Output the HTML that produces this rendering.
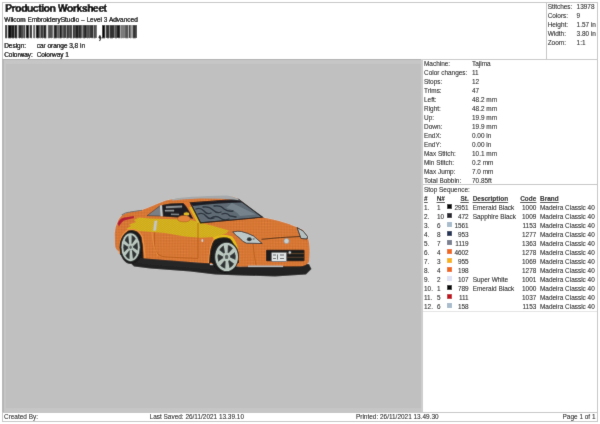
<!DOCTYPE html>
<html><head><meta charset="utf-8"><style>
html,body{margin:0;padding:0;width:600px;height:424px;overflow:hidden;background:#fff;}
body{position:relative;font-family:"Liberation Sans",sans-serif;color:#000;}
.t{position:absolute;white-space:nowrap;line-height:1;filter:grayscale(1);-webkit-text-stroke:0.06px #000;}
.r{position:absolute;}
</style></head><body>
<svg width="0" height="0" style="position:absolute"><filter id="bl" x="0" y="0" width="100%" height="100%"><feConvolveMatrix order="3" kernelMatrix="0.01 0.07 0.01 0.07 0.68 0.07 0.01 0.07 0.01" edgeMode="duplicate"/></filter></svg>
<div id="w" style="position:absolute;left:0;top:0;width:600px;height:424px;background:#fff;filter:url(#bl)">
<div class="r" style="left:2px;top:2px;width:596px;height:1px;background:#c4c4c4;"></div>
<div class="r" style="left:2px;top:2px;width:1px;height:420px;background:#c4c4c4;"></div>
<div class="r" style="left:597px;top:2px;width:1px;height:420px;background:#c4c4c4;"></div>
<div class="r" style="left:545.5px;top:2px;width:1px;height:57px;background:#c4c4c4;"></div>
<div class="r" style="left:423px;top:59px;width:175px;height:1px;background:#c8c8c8;"></div>
<div class="r" style="left:2px;top:59px;width:419px;height:353px;background:#c0c0c0;"></div>
<div class="r" style="left:2px;top:59px;width:421px;height:1px;background:#b0b0b0;"></div>
<div class="r" style="left:2px;top:60px;width:2px;height:352px;background:#b6b6b6;"></div>
<div class="r" style="left:4px;top:60px;width:417px;height:4px;background:#c6c6c6;"></div>
<div class="r" style="left:4px;top:64px;width:2px;height:348px;background:#c6c6c6;"></div>
<div class="r" style="left:6px;top:408px;width:415px;height:4px;background:#c6c6c6;"></div>
<div class="r" style="left:421px;top:59px;width:2px;height:353px;background:#cdcdcd;"></div>
<div class="r" style="left:423px;top:184px;width:174px;height:1px;background:#c4c4c4;"></div>
<div class="r" style="left:423px;top:311px;width:174px;height:1px;background:#e4e4e4;"></div>
<div class="r" style="left:2px;top:412px;width:596px;height:1px;background:#c4c4c4;"></div>
<div class="r" style="left:2px;top:421px;width:596px;height:1px;background:#c4c4c4;"></div>
<div class="t" style="left:5.3px;top:4.00px;font-size:10px;font-weight:bold;letter-spacing:-0.25px;-webkit-text-stroke:0.18px #000;">Production Worksheet</div>
<div class="t" style="left:4.3px;top:17.00px;font-size:6.45px;letter-spacing:0.035px;">Wilcom EmbroideryStudio – Level 3 Advanced</div>
<div class="t" style="left:4.2px;top:43.00px;font-size:6.45px;">Design:</div>
<div class="t" style="left:36.7px;top:43.00px;font-size:6.45px;">car orange 3,8 in</div>
<div class="t" style="left:4.2px;top:52.00px;font-size:6.45px;">Colorway:</div>
<div class="t" style="left:36.7px;top:52.00px;font-size:6.45px;">Colorway 1</div>
<svg class="r" style="left:0;top:25px" width="140" height="13" shape-rendering="crispEdges"><rect x="5.1" y="0" width="1.50" height="13" fill="rgb(110,110,110)"/><rect x="6.6" y="0" width="1.30" height="13" fill="rgb(200,200,200)"/><rect x="7.9" y="0" width="4.10" height="13" fill="rgb(70,70,70)"/><rect x="12.0" y="0" width="1.10" height="13" fill="rgb(200,200,200)"/><rect x="13.1" y="0" width="1.30" height="13" fill="rgb(60,60,60)"/><rect x="14.4" y="0" width="0.90" height="13" fill="rgb(120,120,120)"/><rect x="15.3" y="0" width="1.70" height="13" fill="rgb(50,50,50)"/><rect x="17.0" y="0" width="1.30" height="13" fill="rgb(210,210,210)"/><rect x="18.3" y="0" width="1.70" height="13" fill="rgb(130,130,130)"/><rect x="20.0" y="0" width="1.30" height="13" fill="rgb(50,50,50)"/><rect x="21.3" y="0" width="3.10" height="13" fill="rgb(150,150,150)"/><rect x="24.4" y="0" width="1.30" height="13" fill="rgb(190,190,190)"/><rect x="25.7" y="0" width="1.30" height="13" fill="rgb(40,40,40)"/><rect x="27.0" y="0" width="1.30" height="13" fill="rgb(120,120,120)"/><rect x="28.3" y="0" width="1.70" height="13" fill="rgb(170,170,170)"/><rect x="30.0" y="0" width="1.70" height="13" fill="rgb(60,60,60)"/><rect x="31.7" y="0" width="1.50" height="13" fill="rgb(240,240,240)"/><rect x="33.2" y="0" width="2.00" height="13" fill="rgb(150,150,150)"/><rect x="35.2" y="0" width="0.90" height="13" fill="rgb(210,210,210)"/><rect x="36.1" y="0" width="1.00" height="13" fill="rgb(20,20,20)"/><rect x="37.1" y="0" width="2.40" height="13" fill="rgb(110,110,110)"/><rect x="39.5" y="0" width="1.50" height="13" fill="rgb(220,220,220)"/><rect x="41.0" y="0" width="1.10" height="13" fill="rgb(50,50,50)"/><rect x="42.1" y="0" width="2.60" height="13" fill="rgb(110,110,110)"/><rect x="44.7" y="0" width="0.90" height="13" fill="rgb(60,60,60)"/><rect x="45.6" y="0" width="2.20" height="13" fill="rgb(220,220,220)"/><rect x="47.8" y="0" width="1.30" height="13" fill="rgb(140,140,140)"/><rect x="49.1" y="0" width="2.60" height="13" fill="rgb(80,80,80)"/><rect x="51.7" y="0" width="1.30" height="13" fill="rgb(120,120,120)"/><rect x="53.0" y="0" width="1.70" height="13" fill="rgb(245,245,245)"/><rect x="54.7" y="0" width="1.30" height="13" fill="rgb(60,60,60)"/><rect x="56.0" y="0" width="2.60" height="13" fill="rgb(130,130,130)"/><rect x="58.6" y="0" width="1.30" height="13" fill="rgb(200,200,200)"/><rect x="59.9" y="0" width="1.10" height="13" fill="rgb(40,40,40)"/><rect x="61.0" y="0" width="3.20" height="13" fill="rgb(110,110,110)"/><rect x="64.2" y="0" width="1.30" height="13" fill="rgb(60,60,60)"/><rect x="65.5" y="0" width="1.50" height="13" fill="rgb(230,230,230)"/><rect x="67.0" y="0" width="3.70" height="13" fill="rgb(90,90,90)"/><rect x="70.7" y="0" width="2.20" height="13" fill="rgb(200,200,200)"/><rect x="72.9" y="0" width="1.30" height="13" fill="rgb(40,40,40)"/><rect x="74.2" y="0" width="4.30" height="13" fill="rgb(110,110,110)"/><rect x="78.5" y="0" width="1.10" height="13" fill="rgb(30,30,30)"/><rect x="79.6" y="0" width="1.50" height="13" fill="rgb(230,230,230)"/><rect x="81.1" y="0" width="0.90" height="13" fill="rgb(120,120,120)"/><rect x="82.0" y="0" width="2.00" height="13" fill="rgb(140,140,140)"/><rect x="84.0" y="0" width="1.00" height="13" fill="rgb(235,235,235)"/><rect x="85.0" y="0" width="1.30" height="13" fill="rgb(30,30,30)"/><rect x="86.3" y="0" width="2.60" height="13" fill="rgb(80,80,80)"/><rect x="88.9" y="0" width="1.10" height="13" fill="rgb(210,210,210)"/><rect x="90.0" y="0" width="1.50" height="13" fill="rgb(60,60,60)"/><rect x="91.5" y="0" width="1.80" height="13" fill="rgb(35,35,35)"/><rect x="93.3" y="0" width="1.30" height="13" fill="rgb(200,200,200)"/><rect x="94.6" y="0" width="2.10" height="13" fill="rgb(110,110,110)"/><rect x="102.1" y="0" width="2.00" height="13" fill="rgb(50,50,50)"/><rect x="104.1" y="0" width="1.70" height="13" fill="rgb(190,190,190)"/><rect x="105.8" y="0" width="2.20" height="13" fill="rgb(60,60,60)"/><rect x="108.0" y="0" width="1.60" height="13" fill="rgb(140,140,140)"/><rect x="109.6" y="0" width="1.10" height="13" fill="rgb(220,220,220)"/><rect x="110.7" y="0" width="3.20" height="13" fill="rgb(50,50,50)"/><rect x="113.9" y="0" width="0.80" height="13" fill="rgb(120,120,120)"/><rect x="114.7" y="0" width="2.10" height="13" fill="rgb(200,200,200)"/><rect x="116.8" y="0" width="2.70" height="13" fill="rgb(40,40,40)"/><rect x="119.5" y="0" width="1.60" height="13" fill="rgb(210,210,210)"/><rect x="121.1" y="0" width="1.30" height="13" fill="rgb(30,30,30)"/><rect x="122.4" y="0" width="3.50" height="13" fill="rgb(130,130,130)"/><rect x="125.9" y="0" width="1.00" height="13" fill="rgb(40,40,40)"/><rect x="126.9" y="0" width="2.20" height="13" fill="rgb(210,210,210)"/><rect x="129.1" y="0" width="1.30" height="13" fill="rgb(40,40,40)"/><rect x="130.4" y="0" width="2.70" height="13" fill="rgb(180,180,180)"/><rect x="133.1" y="0" width="1.30" height="13" fill="rgb(40,40,40)"/><rect x="134.4" y="0" width="1.30" height="13" fill="rgb(140,140,140)"/><rect x="135.7" y="0" width="1.40" height="13" fill="rgb(70,70,70)"/></svg>
<svg class="r" style="left:96px;top:34px" width="8" height="8"><ellipse cx="3.9" cy="3.2" rx="1.25" ry="1.35" fill="#000"/><path d="M4.9,3.4 Q4.8,5.6 3.2,6.9" stroke="#111" stroke-width="1.1" fill="none"/></svg>
<div class="r" style="left:423px;top:59px;width:175px;height:1px;background:#c8c8c8;"></div>
<div class="r" style="left:2px;top:59px;width:419px;height:353px;background:#c0c0c0;"></div>
<div class="r" style="left:2px;top:59px;width:421px;height:1px;background:#b0b0b0;"></div>
<div class="r" style="left:2px;top:60px;width:2px;height:352px;background:#b6b6b6;"></div>
<div class="r" style="left:4px;top:60px;width:417px;height:4px;background:#c6c6c6;"></div>
<div class="r" style="left:4px;top:64px;width:2px;height:348px;background:#c6c6c6;"></div>
<div class="r" style="left:6px;top:408px;width:415px;height:4px;background:#c6c6c6;"></div>
<div class="r" style="left:421px;top:59px;width:2px;height:353px;background:#cdcdcd;"></div>
<div class="r" style="left:423px;top:184px;width:174px;height:1px;background:#c4c4c4;"></div>
<div class="r" style="left:423px;top:311px;width:174px;height:1px;background:#e4e4e4;"></div>
<div class="r" style="left:2px;top:412px;width:596px;height:1px;background:#c4c4c4;"></div>
<div class="r" style="left:2px;top:421px;width:596px;height:1px;background:#c4c4c4;"></div>
<div class="t" style="left:5.3px;top:4.00px;font-size:10px;font-weight:bold;letter-spacing:-0.25px;-webkit-text-stroke:0.18px #000;">Production Worksheet</div>
<div class="t" style="left:4.3px;top:17.00px;font-size:6.45px;letter-spacing:0.035px;">Wilcom EmbroideryStudio – Level 3 Advanced</div>
<div class="t" style="left:4.2px;top:43.00px;font-size:6.45px;">Design:</div>
<div class="t" style="left:36.7px;top:43.00px;font-size:6.45px;">car orange 3,8 in</div>
<div class="t" style="left:4.2px;top:52.00px;font-size:6.45px;">Colorway:</div>
<div class="t" style="left:36.7px;top:52.00px;font-size:6.45px;">Colorway 1</div>
<svg class="r" style="left:0;top:24.7px" width="140" height="14"><rect x="5.3" y="0" width="1.5" height="13.3" fill="#222"/><rect x="8.3" y="0" width="3.0" height="13.3" fill="#111"/><rect x="12.1" y="0" width="2.0" height="13.3" fill="#111"/><rect x="15.1" y="0" width="2.0" height="13.3" fill="#111"/><rect x="19.1" y="0" width="1.0" height="13.3" fill="#111"/><rect x="20.9" y="0" width="2.0" height="13.3" fill="#444"/><rect x="23.7" y="0" width="1.0" height="13.3" fill="#111"/><rect x="26.7" y="0" width="2.0" height="13.3" fill="#111"/><rect x="30.7" y="0" width="1.0" height="13.3" fill="#222"/><rect x="33.7" y="0" width="1.0" height="13.3" fill="#555"/><rect x="36.7" y="0" width="2.0" height="13.3" fill="#111"/><rect x="39.7" y="0" width="1.0" height="13.3" fill="#555"/><rect x="41.7" y="0" width="1.5" height="13.3" fill="#444"/><rect x="44.2" y="0" width="2.0" height="13.3" fill="#111"/><rect x="48.2" y="0" width="1.5" height="13.3" fill="#555"/><rect x="50.7" y="0" width="1.0" height="13.3" fill="#555"/><rect x="53.7" y="0" width="3.0" height="13.3" fill="#222"/><rect x="57.7" y="0" width="1.0" height="13.3" fill="#555"/><rect x="59.5" y="0" width="2.0" height="13.3" fill="#111"/><rect x="63.5" y="0" width="1.0" height="13.3" fill="#444"/><rect x="66.5" y="0" width="2.0" height="13.3" fill="#333"/><rect x="70.0" y="0" width="2.0" height="13.3" fill="#444"/><rect x="73.0" y="0" width="1.5" height="13.3" fill="#222"/><rect x="75.5" y="0" width="3.0" height="13.3" fill="#222"/><rect x="79.3" y="0" width="2.0" height="13.3" fill="#333"/><rect x="83.3" y="0" width="2.0" height="13.3" fill="#333"/><rect x="86.8" y="0" width="1.5" height="13.3" fill="#555"/><rect x="89.1" y="0" width="1.0" height="13.3" fill="#555"/><rect x="91.6" y="0" width="1.0" height="13.3" fill="#333"/><rect x="93.6" y="0" width="2.0" height="13.3" fill="#444"/><rect x="102.0" y="0" width="3.0" height="13.3" fill="#111"/><rect x="107.0" y="0" width="2.0" height="13.3" fill="#333"/><rect x="110.0" y="0" width="3.0" height="13.3" fill="#333"/><rect x="115.0" y="0" width="2.0" height="13.3" fill="#555"/><rect x="118.5" y="0" width="1.0" height="13.3" fill="#111"/><rect x="120.5" y="0" width="2.0" height="13.3" fill="#777"/><rect x="123.3" y="0" width="1.0" height="13.3" fill="#777"/><rect x="125.3" y="0" width="3.0" height="13.3" fill="#555"/><rect x="129.8" y="0" width="1.5" height="13.3" fill="#777"/><rect x="132.8" y="0" width="3.0" height="13.3" fill="#333"/><rect x="136.6" y="0" width="0.1" height="13.3" fill="#333"/></svg>
<div class="t" style="left:98.5px;top:30.00px;font-size:9px;font-weight:bold;">,</div>
<div class="t" style="left:547.7px;top:4.00px;font-size:6.45px;">Stitches:</div>
<div class="t" style="left:576.6px;top:4.00px;font-size:6.45px;">13978</div>
<div class="t" style="left:547.7px;top:13.00px;font-size:6.45px;">Colors:</div>
<div class="t" style="left:576.6px;top:13.00px;font-size:6.45px;">9</div>
<div class="t" style="left:547.7px;top:22.00px;font-size:6.45px;">Height:</div>
<div class="t" style="left:576.6px;top:22.00px;font-size:6.45px;">1.57 in</div>
<div class="t" style="left:547.7px;top:31.00px;font-size:6.45px;">Width:</div>
<div class="t" style="left:576.6px;top:31.00px;font-size:6.45px;">3.80 in</div>
<div class="t" style="left:547.7px;top:40.00px;font-size:6.45px;">Zoom:</div>
<div class="t" style="left:576.6px;top:40.00px;font-size:6.45px;">1:1</div>
<div class="t" style="left:424px;top:61.00px;font-size:6.45px;">Machine:</div>
<div class="t" style="left:472px;top:61.00px;font-size:6.45px;">Tajima</div>
<div class="t" style="left:424px;top:70.00px;font-size:6.45px;">Color changes:</div>
<div class="t" style="left:472px;top:70.00px;font-size:6.45px;">11</div>
<div class="t" style="left:424px;top:79.00px;font-size:6.45px;">Stops:</div>
<div class="t" style="left:472px;top:79.00px;font-size:6.45px;">12</div>
<div class="t" style="left:424px;top:88.00px;font-size:6.45px;">Trims:</div>
<div class="t" style="left:472px;top:88.00px;font-size:6.45px;">47</div>
<div class="t" style="left:424px;top:97.00px;font-size:6.45px;">Left:</div>
<div class="t" style="left:472px;top:97.00px;font-size:6.45px;">48.2 mm</div>
<div class="t" style="left:424px;top:106.00px;font-size:6.45px;">Right:</div>
<div class="t" style="left:472px;top:106.00px;font-size:6.45px;">48.2 mm</div>
<div class="t" style="left:424px;top:115.00px;font-size:6.45px;">Up:</div>
<div class="t" style="left:472px;top:115.00px;font-size:6.45px;">19.9 mm</div>
<div class="t" style="left:424px;top:124.00px;font-size:6.45px;">Down:</div>
<div class="t" style="left:472px;top:124.00px;font-size:6.45px;">19.9 mm</div>
<div class="t" style="left:424px;top:133.00px;font-size:6.45px;">EndX:</div>
<div class="t" style="left:472px;top:133.00px;font-size:6.45px;">0.00 in</div>
<div class="t" style="left:424px;top:142.00px;font-size:6.45px;">EndY:</div>
<div class="t" style="left:472px;top:142.00px;font-size:6.45px;">0.00 in</div>
<div class="t" style="left:424px;top:151.00px;font-size:6.45px;">Max Stitch:</div>
<div class="t" style="left:472px;top:151.00px;font-size:6.45px;">10.1 mm</div>
<div class="t" style="left:424px;top:160.00px;font-size:6.45px;">Min Stitch:</div>
<div class="t" style="left:472px;top:160.00px;font-size:6.45px;">0.2 mm</div>
<div class="t" style="left:424px;top:169.00px;font-size:6.45px;">Max Jump:</div>
<div class="t" style="left:472px;top:169.00px;font-size:6.45px;">7.0 mm</div>
<div class="t" style="left:424px;top:178.00px;font-size:6.45px;">Total Bobbin:</div>
<div class="t" style="left:472px;top:178.00px;font-size:6.45px;">70.85ft</div>
<div class="t" style="left:424px;top:187.00px;font-size:6.45px;">Stop Sequence:</div>
<div class="t" style="left:424px;top:196.00px;font-size:6.45px;font-weight:bold;text-decoration:underline;">#</div>
<div class="t" style="left:436.7px;top:196.00px;font-size:6.45px;font-weight:bold;text-decoration:underline;">N#</div>
<div class="t" style="right:131.3px;top:196.00px;font-size:6.45px;font-weight:bold;text-decoration:underline;">St.</div>
<div class="t" style="left:472.7px;top:196.00px;font-size:6.45px;font-weight:bold;text-decoration:underline;">Description</div>
<div class="t" style="right:63.700000000000045px;top:196.00px;font-size:6.45px;font-weight:bold;text-decoration:underline;">Code</div>
<div class="t" style="left:540px;top:196.00px;font-size:6.45px;font-weight:bold;text-decoration:underline;">Brand</div>
<div class="t" style="left:424px;top:205.00px;font-size:6.45px;">1.</div>
<div class="t" style="left:437px;top:205.00px;font-size:6.45px;">1</div>
<div class="r" style="left:446.7px;top:204.2px;width:5.5px;height:5px;background:#0e0e10;"></div>
<div class="t" style="right:131.3px;top:205.00px;font-size:6.45px;">2951</div>
<div class="t" style="left:472.7px;top:205.00px;font-size:6.45px;">Emerald Black</div>
<div class="t" style="right:63.700000000000045px;top:205.00px;font-size:6.45px;">1000</div>
<div class="t" style="left:540px;top:205.00px;font-size:6.45px;">Madeira Classic 40</div>
<div class="t" style="left:424px;top:214.00px;font-size:6.45px;">2.</div>
<div class="t" style="left:437px;top:214.00px;font-size:6.45px;">10</div>
<div class="r" style="left:446.7px;top:213.17px;width:5.5px;height:5px;background:#2a2a30;"></div>
<div class="t" style="right:131.3px;top:214.00px;font-size:6.45px;">472</div>
<div class="t" style="left:472.7px;top:214.00px;font-size:6.45px;">Sapphire Black</div>
<div class="t" style="right:63.700000000000045px;top:214.00px;font-size:6.45px;">1009</div>
<div class="t" style="left:540px;top:214.00px;font-size:6.45px;">Madeira Classic 40</div>
<div class="t" style="left:424px;top:223.00px;font-size:6.45px;">3.</div>
<div class="t" style="left:437px;top:223.00px;font-size:6.45px;">6</div>
<div class="r" style="left:446.7px;top:222.14px;width:5.5px;height:5px;background:#a8bccc;"></div>
<div class="t" style="right:131.3px;top:223.00px;font-size:6.45px;">1561</div>
<div class="t" style="right:63.700000000000045px;top:223.00px;font-size:6.45px;">1153</div>
<div class="t" style="left:540px;top:223.00px;font-size:6.45px;">Madeira Classic 40</div>
<div class="t" style="left:424px;top:232.00px;font-size:6.45px;">4.</div>
<div class="t" style="left:437px;top:232.00px;font-size:6.45px;">8</div>
<div class="r" style="left:446.7px;top:231.10999999999999px;width:5.5px;height:5px;background:#26385a;"></div>
<div class="t" style="right:131.3px;top:232.00px;font-size:6.45px;">953</div>
<div class="t" style="right:63.700000000000045px;top:232.00px;font-size:6.45px;">1277</div>
<div class="t" style="left:540px;top:232.00px;font-size:6.45px;">Madeira Classic 40</div>
<div class="t" style="left:424px;top:241.00px;font-size:6.45px;">5.</div>
<div class="t" style="left:437px;top:241.00px;font-size:6.45px;">7</div>
<div class="r" style="left:446.7px;top:240.07999999999998px;width:5.5px;height:5px;background:#7a8090;"></div>
<div class="t" style="right:131.3px;top:241.00px;font-size:6.45px;">1119</div>
<div class="t" style="right:63.700000000000045px;top:241.00px;font-size:6.45px;">1363</div>
<div class="t" style="left:540px;top:241.00px;font-size:6.45px;">Madeira Classic 40</div>
<div class="t" style="left:424px;top:250.00px;font-size:6.45px;">6.</div>
<div class="t" style="left:437px;top:250.00px;font-size:6.45px;">4</div>
<div class="r" style="left:446.7px;top:249.04999999999998px;width:5.5px;height:5px;background:#f06a1c;"></div>
<div class="t" style="right:131.3px;top:250.00px;font-size:6.45px;">4602</div>
<div class="t" style="right:63.700000000000045px;top:250.00px;font-size:6.45px;">1278</div>
<div class="t" style="left:540px;top:250.00px;font-size:6.45px;">Madeira Classic 40</div>
<div class="t" style="left:424px;top:259.00px;font-size:6.45px;">7.</div>
<div class="t" style="left:437px;top:259.00px;font-size:6.45px;">3</div>
<div class="r" style="left:446.7px;top:258.02px;width:5.5px;height:5px;background:#f8b418;"></div>
<div class="t" style="right:131.3px;top:259.00px;font-size:6.45px;">955</div>
<div class="t" style="right:63.700000000000045px;top:259.00px;font-size:6.45px;">1069</div>
<div class="t" style="left:540px;top:259.00px;font-size:6.45px;">Madeira Classic 40</div>
<div class="t" style="left:424px;top:268.00px;font-size:6.45px;">8.</div>
<div class="t" style="left:437px;top:268.00px;font-size:6.45px;">4</div>
<div class="r" style="left:446.7px;top:266.99px;width:5.5px;height:5px;background:#f06a1c;"></div>
<div class="t" style="right:131.3px;top:268.00px;font-size:6.45px;">198</div>
<div class="t" style="right:63.700000000000045px;top:268.00px;font-size:6.45px;">1278</div>
<div class="t" style="left:540px;top:268.00px;font-size:6.45px;">Madeira Classic 40</div>
<div class="t" style="left:424px;top:277.00px;font-size:6.45px;">9.</div>
<div class="t" style="left:437px;top:277.00px;font-size:6.45px;">2</div>
<div class="r" style="left:446.7px;top:275.96px;width:5.5px;height:5px;background:#dfe2f4;"></div>
<div class="t" style="right:131.3px;top:277.00px;font-size:6.45px;">107</div>
<div class="t" style="left:472.7px;top:277.00px;font-size:6.45px;">Super White</div>
<div class="t" style="right:63.700000000000045px;top:277.00px;font-size:6.45px;">1001</div>
<div class="t" style="left:540px;top:277.00px;font-size:6.45px;">Madeira Classic 40</div>
<div class="t" style="left:424px;top:286.00px;font-size:6.45px;">10.</div>
<div class="t" style="left:437px;top:286.00px;font-size:6.45px;">1</div>
<div class="r" style="left:446.7px;top:284.93px;width:5.5px;height:5px;background:#0a0a0a;"></div>
<div class="t" style="right:131.3px;top:286.00px;font-size:6.45px;">789</div>
<div class="t" style="left:472.7px;top:286.00px;font-size:6.45px;">Emerald Black</div>
<div class="t" style="right:63.700000000000045px;top:286.00px;font-size:6.45px;">1000</div>
<div class="t" style="left:540px;top:286.00px;font-size:6.45px;">Madeira Classic 40</div>
<div class="t" style="left:424px;top:295.00px;font-size:6.45px;">11.</div>
<div class="t" style="left:437px;top:295.00px;font-size:6.45px;">5</div>
<div class="r" style="left:446.7px;top:293.9px;width:5.5px;height:5px;background:#c01423;"></div>
<div class="t" style="right:131.3px;top:295.00px;font-size:6.45px;">111</div>
<div class="t" style="right:63.700000000000045px;top:295.00px;font-size:6.45px;">1037</div>
<div class="t" style="left:540px;top:295.00px;font-size:6.45px;">Madeira Classic 40</div>
<div class="t" style="left:424px;top:304.00px;font-size:6.45px;">12.</div>
<div class="t" style="left:437px;top:304.00px;font-size:6.45px;">6</div>
<div class="r" style="left:446.7px;top:302.87px;width:5.5px;height:5px;background:#a8bccc;"></div>
<div class="t" style="right:131.3px;top:304.00px;font-size:6.45px;">158</div>
<div class="t" style="right:63.700000000000045px;top:304.00px;font-size:6.45px;">1153</div>
<div class="t" style="left:540px;top:304.00px;font-size:6.45px;">Madeira Classic 40</div>
<div class="t" style="left:4px;top:414.00px;font-size:6.45px;">Created By:</div>
<div class="t" style="left:149.6px;top:414.00px;font-size:6.45px;">Last Saved: 26/11/2021 13.39.10</div>
<div class="t" style="left:356px;top:414.00px;font-size:6.45px;">Printed: 26/11/2021 13.49.30</div>
<div class="t" style="right:4.5px;top:414.00px;font-size:6.45px;">Page 1 of 1</div>

<svg style="position:absolute;left:0;top:0" width="600" height="424" viewBox="0 0 600 424">
<defs>
<pattern id="st" width="1.6" height="1.6" patternUnits="userSpaceOnUse" patternTransform="rotate(35)"><rect width="1.6" height="0.7" fill="#000" opacity="0.07"/></pattern>
<pattern id="chk" width="2.2" height="2.2" patternUnits="userSpaceOnUse" patternTransform="rotate(45)"><rect width="1.1" height="1.1" fill="#000" opacity="0.09"/><rect x="1.1" y="1.1" width="1.1" height="1.1" fill="#000" opacity="0.09"/><rect x="1.1" y="0" width="1.1" height="1.1" fill="#fff" opacity="0.06"/><rect x="0" y="1.1" width="1.1" height="1.1" fill="#fff" opacity="0.06"/></pattern>
</defs>
<!-- shadow under car -->
<path d="M126,259 L146,260.5 L200,264.5 L240,266.5 L309,264 L311.5,269 L306,274.5 L275,276.5 L240,275.5 L215,274.5 L190,271.5 L150,268.5 L134,266.5 Z" fill="#242424"/>
<!-- body -->
<path d="M115,233 Q115.5,226 118,221 C120,216 124,213 130,212 L142,210 C150,207.5 158,203 166,200.5 C172,199 180,198.3 190,198.1 L233,196.8 L239.5,199.5 L263,217.5 Q281,220.5 295,226.5 L303,230 L307.5,236 Q310,244 309.5,252" fill="none" stroke="#cdcdcd" stroke-width="1.2"/>
<path d="M118,221 C120,216 124,213 130,212 L142,210 C150,207.5 158,203 166,200.5 C172,199 180,198.3 190,198.1 L233,196.8 L239.5,199.5 L263,217.5 Q281,220.5 295,226.5 L303,230 L307.5,236 Q310,244 309.5,252 L309,262 Q306,266 300,266.3 L240,266.5 L200,263 L145,259 L130,257 L120,252 Q115,250 115,244 L114.8,233 Q115.5,226 118,221 Z" fill="#e07830"/>
<path d="M118,221 C120,216 124,213 130,212 L142,210 C150,207.5 158,203 166,200.5 C172,199 180,198.3 190,198.1 L233,196.8 L239.5,199.5 L263,217.5 Q281,220.5 295,226.5 L303,230 L307.5,236 Q310,244 309.5,252 L309,262 Q306,266 300,266.3 L240,266.5 L200,263 L145,259 L130,257 L120,252 Q115,250 115,244 L114.8,233 Q115.5,226 118,221 Z" fill="url(#chk)"/>
<path d="M121.8,215.2 C124,213 126,212.5 130,212 L142,210.2" fill="none" stroke="#707070" stroke-width="1.1"/>
<!-- yellow flame -->
<path d="M139,217.6 L150,218.4 L190,219.8 L200,222.6 L215,226.5 L229,230.5 L226,233.5 L215,237 L200,237.8 L185,236.5 L165,233 L146,231.5 L130,230.5 L126.5,228.5 L131,226 L129,224.5 L136,222 L134,220 Z" fill="#d8b420"/>
<path d="M139,217.6 L150,218.4 L190,219.8 L200,222.6 L215,226.5 L229,230.5 L226,233.5 L215,237 L200,237.8 L185,236.5 L165,233 L146,231.5 L130,230.5 L126.5,228.5 L131,226 L129,224.5 L136,222 L134,220 Z" fill="url(#st)"/>
<!-- front wheel well -->
<path d="M209,263 Q209,242 217,237.5 Q225,233.5 233,239 Q238.5,247 239,263 Z" fill="#1e1e1e"/>
<!-- front fender yellow arch -->
<path d="M213.5,238.5 Q223,234 231,237.5 Q235.5,242 236.8,250 L237.8,260" fill="none" stroke="#e4bc1e" stroke-width="2.6"/>
<path d="M208.5,263 Q209,246 214,238.5" fill="none" stroke="#f09040" stroke-width="1"/>
<!-- rear wheel well -->
<path d="M120,255 Q119,236 128,230.5 Q137.5,228 141.5,237 Q143.5,248 143.5,260 Z" fill="#1e1e1e"/>
<path d="M119.5,254 Q118.5,235 128,229.8 Q138,227 142.5,237 Q144.8,248 145,260" fill="none" stroke="#ee9040" stroke-width="1.1"/>
<!-- door panel crease -->
<path d="M154.5,232.5 L154.5,247 Q156,256.5 166,257 L198,258.5 L198,223" fill="none" stroke="#b85c1a" stroke-width="0.8"/>
<path d="M152,232 Q153,248 158,256" fill="none" stroke="#f09848" stroke-width="0.6"/>
<!-- side skirt dark band -->
<path d="M136,257.5 L146,258.6 L200,262.8 L210,263.3 L210,268.5 L200,268.5 L146,264.5 L136,262 Z" fill="#262626"/>
<!-- taillight -->
<path d="M117.5,223.5 Q119.5,218.5 124,217.5 L134,216 L134,218 L124,220.5 Q120.5,223 119,226.5 Z" fill="#b41e36"/>
<!-- rear quarter window -->
<path d="M147,215.7 L160,205.8 L161.5,216 Z" fill="#7a7f85" stroke="#2a2a2a" stroke-width="0.5"/>
<!-- side window -->
<path d="M161.5,205.2 Q170,202.8 183.5,203 Q187.5,207 190,212.5 L193.5,218.8 L190,218.2 L162.5,216.5 Z" fill="#1d1f23"/>
<path d="M159.8,205.6 L162,205.2 L162.8,216.3 L160.6,216.3 Z" fill="#c4c8c8"/>
<path d="M166,206.2 L182,205.6 L182,207.6 L166,208.2 Z" fill="#8a8e92"/>
<path d="M165,210 L174,209.8 L174,211.4 L165,211.6 Z" fill="#8a8e92"/>
<path d="M171,213.5 L179,213.8 L179,215.3 L171,215 Z" fill="#7a7e82"/>
<ellipse cx="186.5" cy="214" rx="2.8" ry="1.8" fill="#e0b820"/>
<!-- mirror -->
<path d="M177.5,219 Q178,215.5 184,215.5 Q190,215.5 190.3,219 Q190,222 184,221.8 Q178,221.8 177.5,219 Z" fill="#e4843a" stroke="#a85420" stroke-width="0.5"/>
<!-- A pillar -->
<path d="M183.5,202.2 L190.8,202.4 L201,223 L193.5,219 Q191,213 188,208 Q186,204.5 183.5,203 Z" fill="#e07830"/>
<path d="M189.2,207.5 L191.5,206.5 L201,223 L197,222.6 Z" fill="#dcb622"/>
<!-- windshield -->
<path d="M190.3,202.8 L238.5,199.2 L262.5,217.2 L200.5,222.8 Z" fill="#5f6b75" stroke="#121416" stroke-width="1.1"/>
<path d="M191,203 L238,199.6 L242,202.5 Q215,203 193,206 Z" fill="#1a1d22"/>
<path d="M232,203 L256,214.5 L240,216 Q236,210 226,208 Z" fill="#7c8a92" opacity="0.8"/>
<g fill="none" stroke="#28303a" stroke-width="1.3" stroke-linecap="round">
<path d="M196,209 Q200,207 204,211 Q207,215 211,213"/>
<path d="M198,214 Q203,212 206,216 Q209,220 214,218"/>
<path d="M203,207 Q209,206 213,210 Q217,214 221,212"/>
<path d="M211,218 Q216,215 220,218 Q224,221 229,219"/>
<path d="M214,206 Q221,205 224,209 Q228,212 233,211"/>
<path d="M222,214 Q227,212 230,216 L236,217"/>
</g>
<!-- roof silver -->
<path d="M172,199.2 Q185,196.5 227,195.6 Q235,196.5 240,200.5 L237,200 Q230,198.3 200,198.4 Q185,198.6 172,200.5 Z" fill="#a5a9ab"/>
<!-- door handle -->
<path d="M154.5,221 L157.2,220.6 L156,230.5 L153.2,230.8 Z" fill="#c2c6c6"/>
<!-- side repeater -->
<ellipse cx="202.3" cy="240.5" rx="0.9" ry="1.6" fill="#c8d0d0"/>
<!-- rear wheel -->
<ellipse cx="131" cy="247.5" rx="11.5" ry="16.5" fill="#1a1a1a"/>
<ellipse cx="130.6" cy="247.2" rx="9.2" ry="14.0" fill="#bac8c0"/>
<ellipse cx="130.6" cy="247.2" rx="7.299999999999999" ry="12.1" fill="#2e3230"/>
<path d="M131.51,243.88 L131.66,234.50 L128.18,234.80 L129.32,244.07 Z" fill="#bac8c0"/>
<path d="M132.98,246.24 L137.99,241.41 L135.99,238.54 L131.71,244.44 Z" fill="#bac8c0"/>
<path d="M132.06,249.57 L136.93,254.11 L138.41,250.94 L132.99,247.57 Z" fill="#bac8c0"/>
<path d="M129.69,250.52 L129.54,259.90 L133.02,259.60 L131.88,250.33 Z" fill="#bac8c0"/>
<path d="M128.22,248.16 L123.21,252.99 L125.21,255.86 L129.49,249.96 Z" fill="#bac8c0"/>
<path d="M129.14,244.83 L124.27,240.29 L122.79,243.46 L128.21,246.83 Z" fill="#bac8c0"/>
<ellipse cx="130.6" cy="247.2" rx="2.37" ry="3.6" fill="#bac8c0"/>
<ellipse cx="130.6" cy="247.2" rx="1.18" ry="1.80" fill="#555c58"/>
<!-- front wheel -->
<ellipse cx="225" cy="256.6" rx="14" ry="16.3" fill="#1a1a1a"/>
<ellipse cx="226.6" cy="256.9" rx="11.4" ry="14.2" fill="#bac8c0"/>
<ellipse cx="226.6" cy="256.9" rx="9.100000000000001" ry="11.899999999999999" fill="#2e3230"/>
<path d="M227.62,252.84 L227.91,244.36 L223.62,244.73 L225.03,253.07 Z" fill="#bac8c0"/>
<path d="M229.95,255.69 L235.70,251.55 L233.23,248.03 L228.46,253.56 Z" fill="#bac8c0"/>
<path d="M228.93,259.75 L234.39,264.09 L236.21,260.19 L230.03,257.40 Z" fill="#bac8c0"/>
<path d="M225.58,260.96 L225.29,269.44 L229.58,269.07 L228.17,260.73 Z" fill="#bac8c0"/>
<path d="M223.25,258.11 L217.50,262.25 L219.97,265.77 L224.74,260.24 Z" fill="#bac8c0"/>
<path d="M224.27,254.05 L218.81,249.71 L216.99,253.61 L223.17,256.40 Z" fill="#bac8c0"/>
<ellipse cx="226.6" cy="256.9" rx="3.53" ry="4.4" fill="#bac8c0"/>
<ellipse cx="226.6" cy="256.9" rx="1.77" ry="2.20" fill="#555c58"/>
<!-- hood shut line -->
<path d="M261.5,239.3 Q280,237.3 300,236.5" fill="none" stroke="#5a3418" stroke-width="1"/>
<!-- left headlight -->
<path d="M232.7,232 Q238,230.8 241.3,231.5 Q248,233 253.5,236 L262.2,243.5 L246.5,243.2 Q242,241.5 240.5,238.8 Q236,235.5 232.7,232 Z" fill="#bcc8c8" stroke="#222" stroke-width="0.8"/>
<ellipse cx="249.3" cy="239.3" rx="2.4" ry="2" fill="#2c3032"/>
<circle cx="253.6" cy="239" r="1.1" fill="#7a8688"/>
<!-- right headlight -->
<path d="M297,227.5 Q304,230 307.5,236.5 L307,239 L301,238.5 Q299,233 297,227.5 Z" fill="#b4c0c0" stroke="#222" stroke-width="0.9"/>
<!-- badge -->
<circle cx="286.5" cy="241" r="2.6" fill="#c8d0d0" stroke="#8a9090" stroke-width="0.6"/>
<!-- grille -->
<rect x="266" y="249.7" width="38.5" height="11.5" fill="#1e1e1e" rx="1"/>
<g stroke="#6a4a30" stroke-width="0.7">
<line x1="287" y1="253.5" x2="304" y2="253.5"/>
<line x1="287" y1="257.3" x2="304" y2="257.3"/>
</g>
<rect x="271.3" y="252.3" width="15.4" height="9.4" fill="#dfe3e3" stroke="#333" stroke-width="0.5"/>
<g stroke="#333" stroke-width="0.7" fill="none"><path d="M273,255 h3 M273,258.5 h3 M277.5,254.5 v5 M280,255 h4 M280,258.5 h4"/></g>
<circle cx="289.8" cy="252.5" r="1.2" fill="#c8d0d0"/>
<!-- bumper lip -->
<path d="M248,266.2 L283,266.2" stroke="#b4b4b4" stroke-width="1.4"/>
<path d="M253,244 Q254,255 256,265" stroke="#b85c1a" stroke-width="0.8" fill="none"/>
</svg>

</div>
</body></html>
